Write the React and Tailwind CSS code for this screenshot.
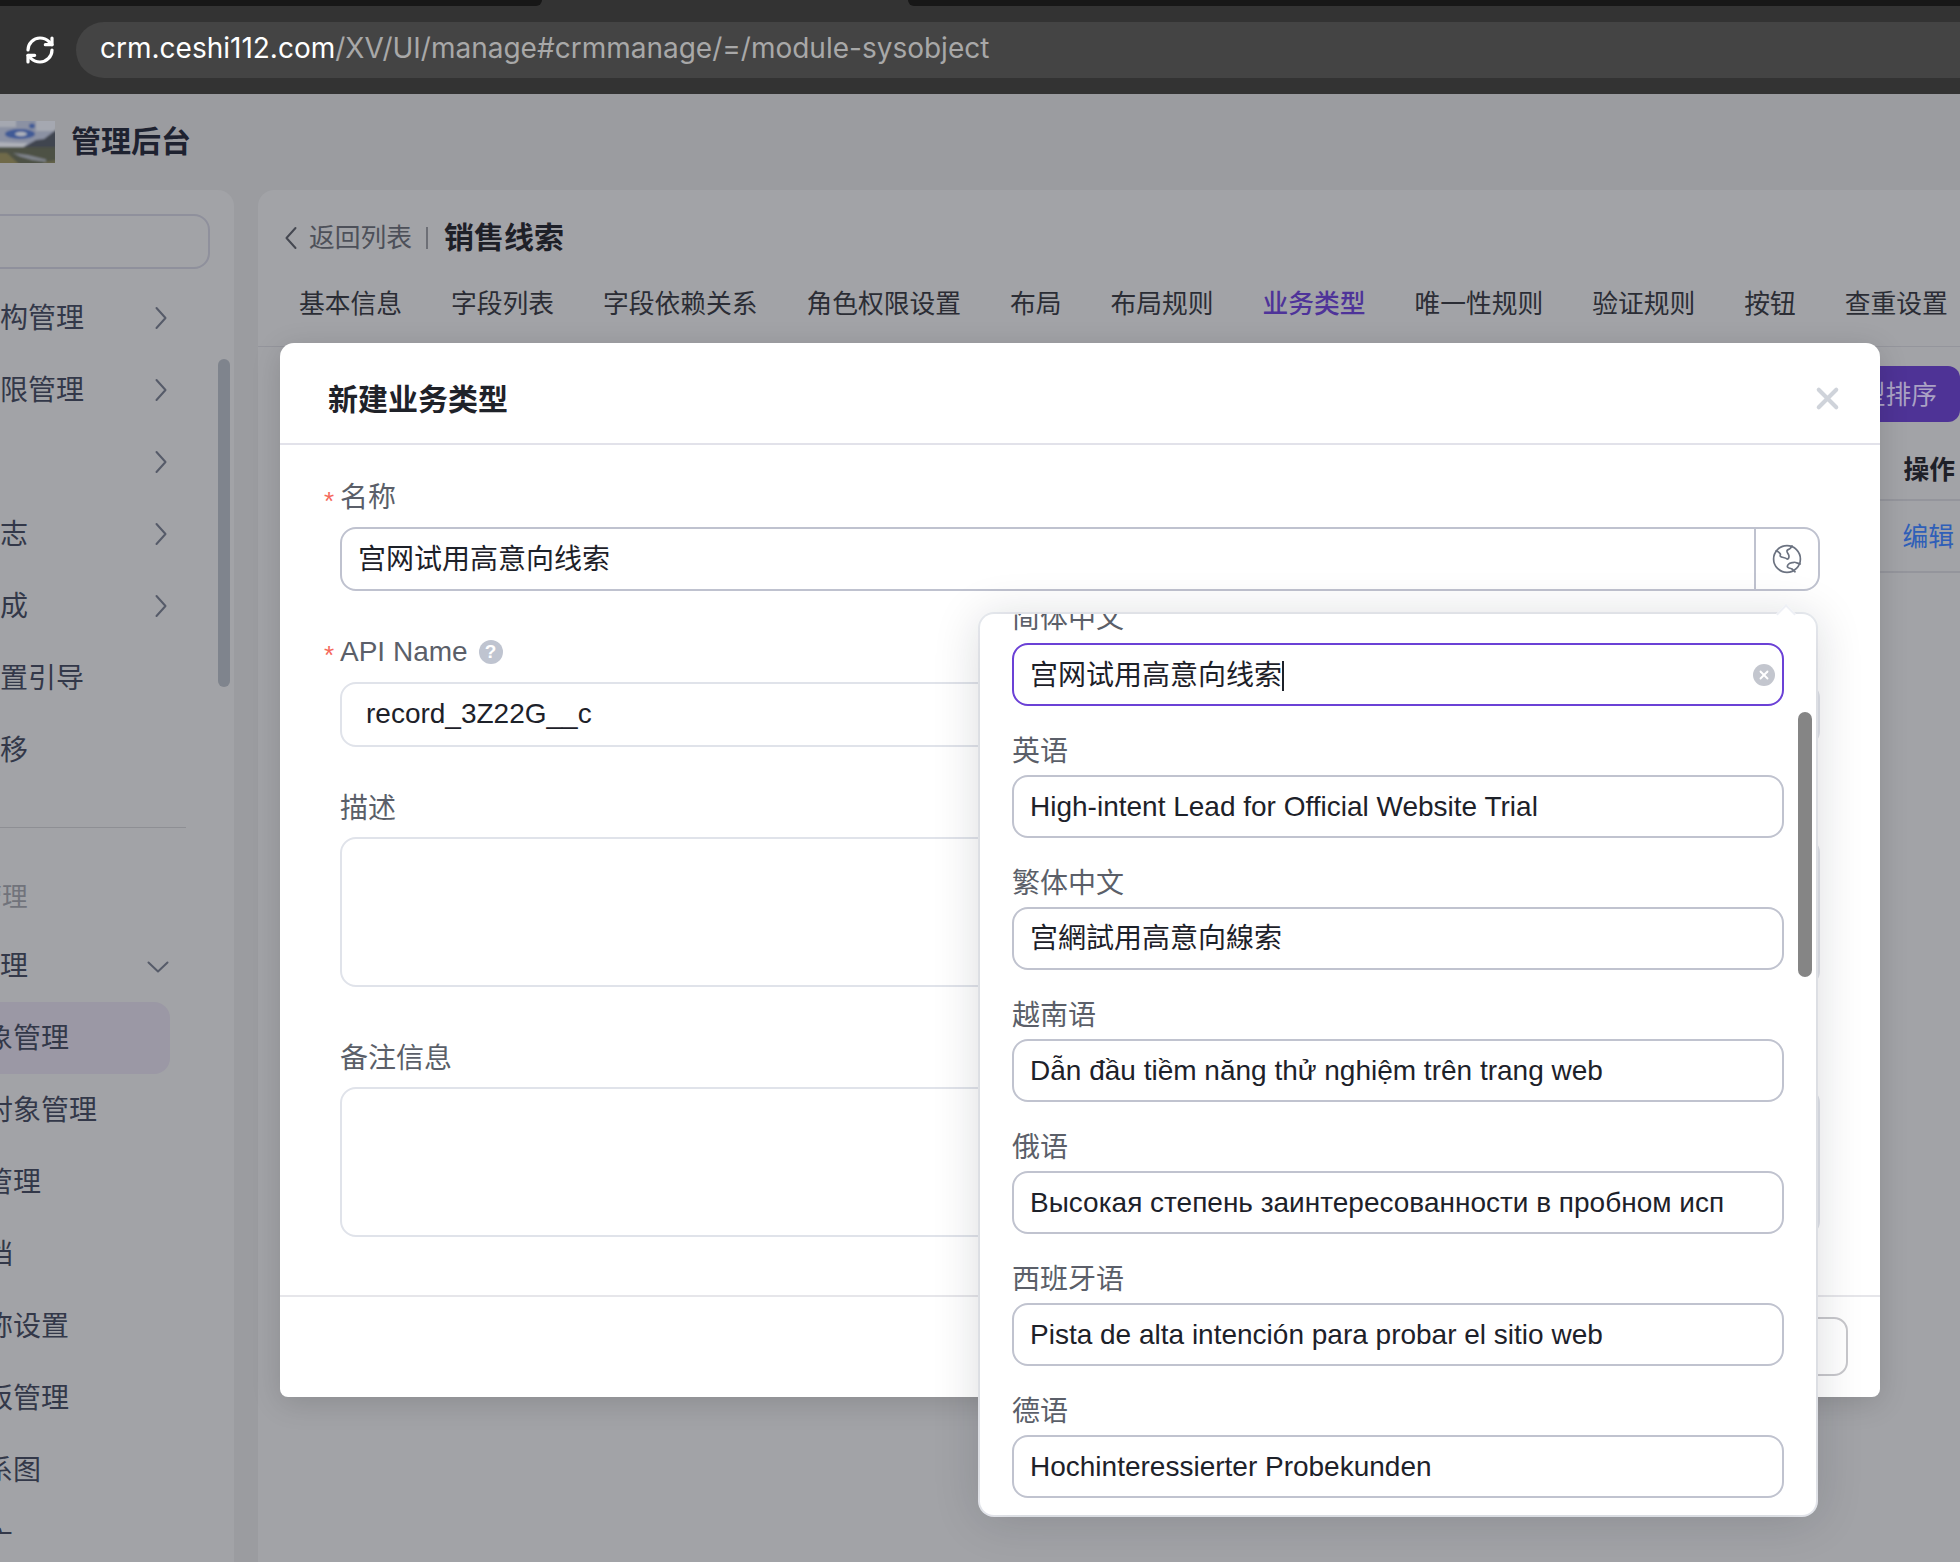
import React from "react";
import { RefreshCw, X } from "lucide-react";

const mainNav = [
  ["组织架构管理", true],
  ["角色权限管理", true],
  ["安全", true],
  ["操作日志", true],
  ["系统集成", true],
  ["系统设置引导", false],
  ["数据迁移", false],
];
const subNav = ["系统对象管理", "自定义对象管理", "选项集管理", "对象文档", "对象名称设置", "邮件模板管理", "对象关系图", "内容推广"];
const tabs = ["基本信息", "字段列表", "字段依赖关系", "角色权限设置", "布局", "布局规则", "业务类型", "唯一性规则", "验证规则", "按钮", "查重设置"];
const langs = [
  ["英语", "High-intent Lead for Official Website Trial"],
  ["繁体中文", "宫網試用高意向線索"],
  ["越南语", "Dẫn đầu tiềm năng thử nghiệm trên trang web"],
  ["俄语", "Высокая степень заинтересованности в пробном исп"],
  ["西班牙语", "Pista de alta intención para probar el sitio web"],
  ["德语", "Hochinteressierter Probekunden"],
];

function Globe() {
  return (
    <svg width="30" height="30" viewBox="0 0 30 30" fill="none" stroke="#6b7280" strokeWidth="1.7" strokeLinejoin="round" strokeLinecap="round">
      <circle cx="15" cy="15" r="13.4" />
      <path d="M4.3 6.7 C6 7.5 7.5 8.6 8.3 10 C8.8 11 7.8 11.6 8.3 12.3 C9.8 14 13 13 15 15 C16.6 15.4 17.4 13 16.7 11 C16.2 9.5 14.6 8.4 15 6.7 C15.4 5.2 17.4 5.6 18.3 4.3 C18.9 3.4 19.6 2.6 20 1.9" />
      <path d="M28.3 20 C26.4 19.9 23.6 17.8 21.7 18.3 C19.6 18.8 17.6 18.8 16.7 20 C15.6 21.2 14.9 22.4 15.7 23.3 C16.8 24.5 18.8 24 20 25 C21.2 26 22.2 27.2 23 27.8" />
    </svg>
  );
}

function Logo() {
  return (
    <svg width="55" height="42" viewBox="0 0 55 42" className="shrink-0 mt-[2px]">
      <defs>
        <filter id="soft"><feGaussianBlur stdDeviation="0.9" /></filter>
      </defs>
      <rect width="55" height="42" fill="#5c6056" />
      <g filter="url(#soft)">
        <rect x="-2" y="-2" width="59" height="30" fill="#8b91a3" />
        <rect x="36" y="-2" width="21" height="12" fill="#a5a8b1" />
        <rect x="-2" y="-2" width="18" height="8" fill="#a5a8b1" />
        <ellipse cx="20" cy="13" rx="15" ry="5" fill="#3f5a96" />
        <ellipse cx="21" cy="13" rx="6" ry="2.2" fill="#aeb2bb" />
        <ellipse cx="32" cy="5" rx="3" ry="2.4" fill="#3f5a96" />
        <path d="M-2 21 L20 22 L28 22 L22 27 L-2 27 Z" fill="#aeb1b8" />
        <path d="M22 27 L36 19 L44 18 L57 8 L57 27 Z" fill="#41444f" />
        <path d="M-2 26 L57 26 L57 44 L-2 44 Z" fill="#4d5145" />
        <path d="M-2 32 L7 32 L20 44 L-2 44 Z" fill="#6f6a48" />
        <path d="M13 32 L28 34 L46 38.5 L46 41 L32 39 L20 35.5 Z" fill="#7f838b" />
        <path d="M44 41 L57 39 L57 44 L44 44 Z" fill="#65634a" />
      </g>
    </svg>
  );
}

function ArrowRight() {
  return (
    <svg width="12" height="24" viewBox="0 0 12 24" fill="none" stroke="#565b69" strokeWidth="2" strokeLinecap="round" strokeLinejoin="round" className="-mt-[2px]">
      <path d="M1.5 2 L10.5 12 L1.5 22" />
    </svg>
  );
}

function PopField({ label, value }) {
  return (
    <div className="flex flex-col">
      <div className="h-[50px] pt-[4px] flex items-center text-[28px] text-[#5b5f69]">{label}</div>
      <div className="h-[63px] w-[772px] border-2 border-[#c0c3cf] rounded-[16px] flex items-center pl-[16px] text-[28px] text-[#1d2129] whitespace-nowrap overflow-hidden">
        {value}
      </div>
    </div>
  );
}

export default function App() {
  return (
    <div className="relative w-[1960px] h-[1562px] overflow-hidden flex flex-col bg-[#9b9ca0] font-['Liberation_Sans','Noto_Sans_CJK_SC',sans-serif]">
      {/* browser chrome */}
      <div className="h-[94px] shrink-0 bg-[#333333] flex flex-col">
        <div className="h-[6px] flex">
          <div className="w-[542px] h-full bg-[#171717] rounded-br-[10px]" />
          <div className="flex-1" />
          <div className="w-[1052px] h-full bg-[#171717] rounded-bl-[10px]" />
        </div>
        <div className="flex-1 flex items-start pt-[16px]">
          <div className="w-[76px] h-[56px] flex items-center justify-center pl-[4px]">
            <RefreshCw size={32} color="#ffffff" strokeWidth={2.4} />
          </div>
          <div className="flex-1 h-[56px] pb-[5px] bg-[#444444] rounded-l-[28px] flex items-center pl-[24px] font-['Inter',sans-serif] text-[28px] whitespace-nowrap">
            <span className="text-white">crm.ceshi112.com</span>
            <span className="text-[#a8a8a8]">/XV/UI/manage#crmmanage/=/module-sysobject</span>
          </div>
        </div>
      </div>

      {/* app header */}
      <div className="h-[96px] shrink-0 flex items-center gap-[16px] pb-[2px]">
        <Logo />
        <span className="text-[30px] font-semibold text-[#1e2230]">管理后台</span>
      </div>

      {/* app body */}
      <div className="flex-1 flex gap-[24px] min-h-0">
        <aside className="relative w-[234px] shrink-0 bg-[#a2a3a7] rounded-tr-[16px] overflow-hidden">
          <div className="-ml-[84px] w-[318px] pt-[24px]">
            <div className="w-[294px] h-[55px] border-2 border-[#8f909c] rounded-[16px]" />
            <div className="mt-[14px] flex flex-col">
              {mainNav.map(([t, arrow]) => (
                <div key={t} className="h-[72px] w-[251px] flex items-center justify-between text-[28px] text-[#333849]">
                  <span>{t}</span>
                  {arrow && <ArrowRight />}
                </div>
              ))}
            </div>
            <div className="mt-[40px] h-px w-[270px] bg-[#8e8f94]" />
            <div className="mt-[34px] h-[70px] flex items-center text-[25.6px] text-[#71737b] -ml-[42px]">业务定制管理</div>
            <div className="h-[70px] w-[253px] flex items-center justify-between text-[28px] text-[#333849]">
              <span>对象管理</span>
              <svg width="22" height="12" viewBox="0 0 22 12" fill="none" stroke="#565b69" strokeWidth="2" strokeLinecap="round" strokeLinejoin="round">
                <path d="M1.5 1.5 L11 10.5 L20.5 1.5" />
              </svg>
            </div>
            <div className="flex flex-col -ml-[15px]">
              {subNav.map((t, i) => (
                <div key={t} className={`h-[72px] w-[269px] pt-[2px] flex items-center text-[28px] text-[#333849] ${i === 0 ? "bg-[#9b98a5] rounded-[16px]" : ""}`}>
                  {t}
                </div>
              ))}
            </div>
          </div>
          <div className="absolute left-[218px] top-[169px] w-[12px] h-[328px] rounded-full bg-[#7f848d]" />
        </aside>

        <main className="flex-1 bg-[#a2a3a7] rounded-tl-[16px] overflow-hidden flex flex-col">
          <div className="h-[96px] flex items-center pl-[27px]">
            <svg width="12" height="24" viewBox="0 0 12 24" fill="none" stroke="#454851" strokeWidth="2" strokeLinecap="round" strokeLinejoin="round">
              <path d="M10.5 2 L1.5 12 L10.5 22" />
            </svg>
            <span className="ml-[12px] text-[25.76px] text-[#4d5059]">返回列表</span>
            <span className="ml-[14px] w-[2px] h-[22px] bg-[#6d6f76]" />
            <span className="ml-[16px] -mt-[2px] text-[30px] font-semibold text-[#1e2028]">销售线索</span>
          </div>
          <div className="h-[61px] border-b border-[#94959c] flex items-start pl-[41px] gap-[49px] text-[25.76px] text-[#2b2d35] whitespace-nowrap">
            {tabs.map((t) => (
              <span key={t} className={t === "业务类型" ? "font-medium text-[#4e3399] leading-[36px]" : "leading-[36px]"}>{t}</span>
            ))}
          </div>
          <div className="flex justify-end mt-[19px]">
            <div className="h-[56px] w-[200px] pt-[3px] rounded-[12px] bg-[#4e3396] text-[#aaa2c4] text-[25.76px] flex items-center justify-start pl-[74px] whitespace-nowrap">
              类型排序
            </div>
          </div>
          <div className="flex flex-col mt-[7px] ml-[60px] text-[25.76px]">
            <div className="h-[72px] pt-[12px] pr-[5px] border-b-2 border-[#94959c] flex items-center justify-end font-semibold text-[#1e2028]">操作</div>
            <div className="h-[72px] pt-[3px] pr-[6px] border-b-2 border-[#94959c] flex items-center justify-end text-[#2f5fb8]">编辑</div>
          </div>
        </main>
      </div>

      {/* modal */}
      <div className="absolute left-[280px] top-[343px] w-[1600px] h-[1054px] bg-white rounded-t-[14px] rounded-b-[8px] shadow-[0_6px_30px_rgba(0,0,0,0.14)] flex flex-col">
        <div className="h-[102px] shrink-0 pt-[14px] border-b-2 border-[#e2e2ea] flex items-center justify-between pl-[48px] pr-[35px]">
          <span className="font-semibold leading-[40px] text-[30px] text-[#1f2229]">新建业务类型</span>
          <X size={35} color="#cfd3da" strokeWidth={2.8} className="-mt-[4px]" />
        </div>
        <div className="flex-1 pl-[60px] pr-[60px] pt-[26px] flex flex-col">
          <div className="relative h-[50px] pt-[4px] flex items-center text-[28px] text-[#5b5f69]">
            <span className="absolute -left-[16px] top-[11px] text-[26px] text-[#f5695c]">*</span>
            名称
          </div>
          <div className="mt-[6px] h-[64px] border-2 border-[#bfc2cf] rounded-[16px] flex items-stretch text-[28px] text-[#1d2129]">
            <div className="flex-1 flex items-center pl-[16px] pt-[2px]">宫网试用高意向线索</div>
            <div className="w-[64px] border-l-2 border-[#bfc2cf] flex items-center justify-center">
              <Globe />
            </div>
          </div>
          <div className="relative mt-[36px] h-[50px] flex items-center gap-[11px] text-[28px] text-[#5b5f69]">
            <span className="absolute -left-[16px] top-[9px] text-[26px] text-[#f5695c]">*</span>
            <span>API Name</span>
            <span className="w-[24px] h-[24px] rounded-full bg-[#bfc4d0] text-white text-[19px] font-bold flex items-center justify-center">?</span>
          </div>
          <div className="mt-[5px] h-[65px] pb-[1px] border-2 border-[#e0e3ea] rounded-[16px] flex items-center pl-[24px] text-[28px] text-[#1d2129]">record_3Z22G__c</div>
          <div className="mt-[36px] h-[50px] pt-[2px] flex items-center text-[28px] text-[#5b5f69]">描述</div>
          <div className="mt-[4px] h-[150px] border-2 border-[#e0e3ea] rounded-[16px]" />
          <div className="mt-[46px] h-[50px] pt-[2px] flex items-center text-[28px] text-[#5b5f69]">备注信息</div>
          <div className="mt-[4px] h-[150px] border-2 border-[#e0e3ea] rounded-[16px]" />
        </div>
        <div className="h-[102px] shrink-0 border-t-2 border-[#e6e6ea] flex items-center justify-end pr-[32px] pb-[2px]">
          <div className="w-[140px] h-[59px] border-2 border-[#c8c8cc] rounded-[14px] flex items-center justify-center text-[26px] text-[#1d2129]">取消</div>
        </div>
      </div>

      {/* language popover */}
      <div className="absolute left-[980px] top-[614px] w-[836px] h-[901px] bg-white rounded-[14px] shadow-[0_4px_48px_rgba(20,25,40,0.16),0_0_0_2px_#eef0f5]">
        <div className="absolute left-[799px] -top-[7px] w-[14px] h-[14px] rotate-45 bg-white border-l-2 border-t-2 border-[#eef0f5]" />
        <div className="relative w-full h-full overflow-hidden rounded-[14px] pl-[32px]">
          <div className="-mt-[23px] flex flex-col gap-[19px]">
            <div className="flex flex-col">
              <div className="h-[52px] pt-[3px] flex items-center text-[28px] text-[#5b5f69]">简体中文</div>
              <div className="relative h-[63px] w-[772px] pt-[2px] border-2 border-[#6b41d6] rounded-[16px] flex items-center pl-[16px] text-[28px] text-[#1d2129]">
                <span>宫网试用高意向线索</span>
                <span className="w-[2px] h-[30px] bg-[#1d2129]" />
                <span className="absolute right-[7px] top-[19px] w-[22px] h-[22px] rounded-full bg-[#c3c6ce] flex items-center justify-center">
                  <X size={14} color="#ffffff" strokeWidth={3.2} />
                </span>
              </div>
            </div>
            {langs.map(([l, v]) => (
              <PopField key={l} label={l} value={v} />
            ))}
          </div>
          <div className="absolute left-[818px] top-[98px] w-[14px] h-[265px] rounded-full bg-[#858585]" />
        </div>
      </div>
    </div>
  );
}
